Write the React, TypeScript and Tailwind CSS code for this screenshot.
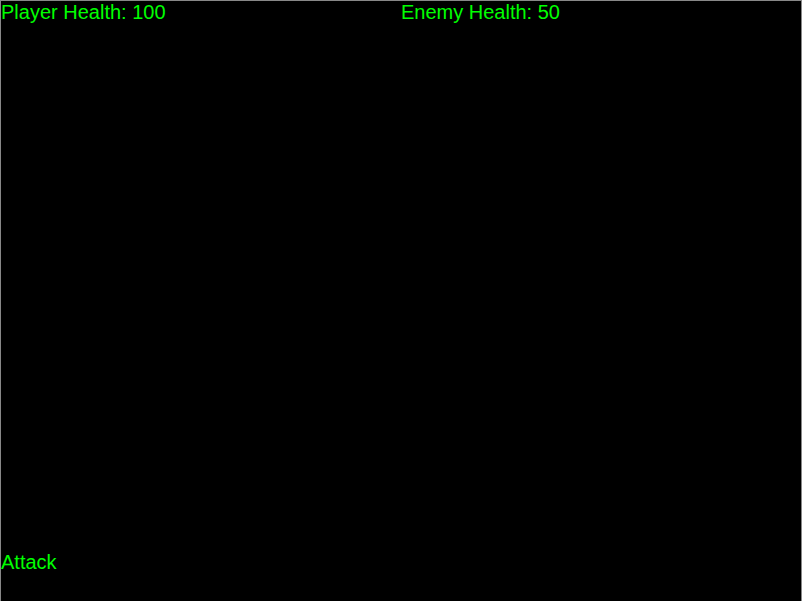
export default function App() {
  return (
    <div className="w-[802px] h-[602px] border border-[#888] bg-black flex flex-col justify-between text-[20px] leading-[23px] text-[#00ff00] font-['Liberation_Sans',Arial,sans-serif]">
      <div className="grid grid-cols-2">
        <div>Player Health: 100</div>
        <div>Enemy Health: 50</div>
      </div>
      <div className="mb-[27px]">Attack</div>
    </div>
  );
}
